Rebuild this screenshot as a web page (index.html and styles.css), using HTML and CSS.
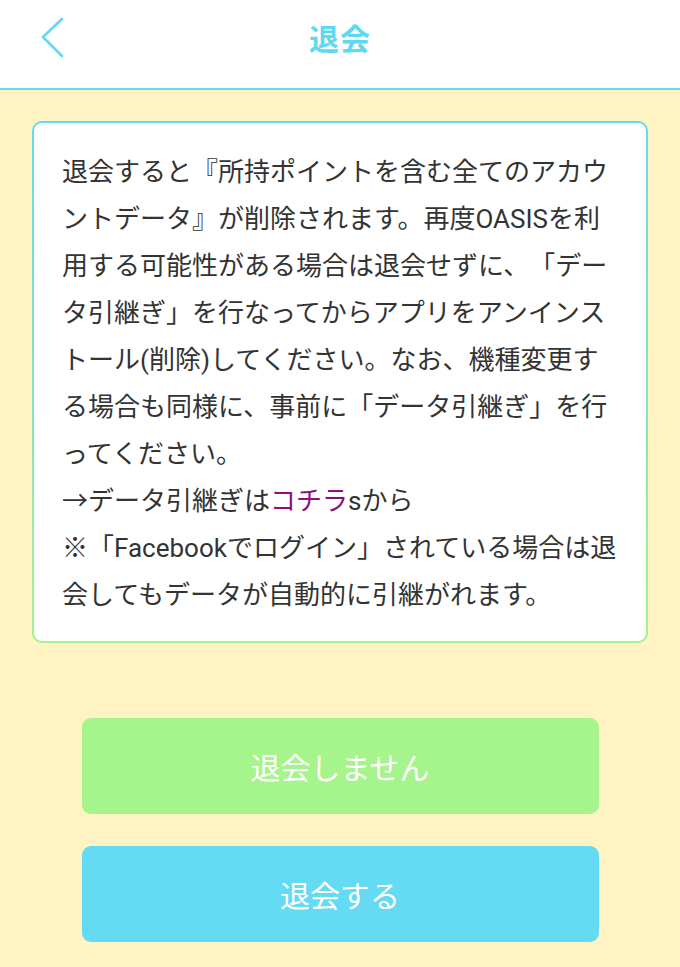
FILE: index.html
```html
<!DOCTYPE html>
<html lang="ja">
<head>
<meta charset="utf-8">
<title>退会</title>
<link rel="stylesheet" href="styles.css">
</head>
<body>
<header class="header">
  <a class="back" href="#" aria-label="戻る">
    <svg width="30" height="44" viewBox="0 0 30 44"><path d="M22 3 L3 21 L22 40" fill="none" stroke="#5fd8f2" stroke-width="2.6" stroke-linecap="round" stroke-linejoin="round"/></svg>
  </a>
  <h1 class="title">退会</h1>
</header>
<main class="content">
  <section class="notice">
    <p>退会すると『所持ポイントを含む全てのアカウントデータ』が削除されます。再度OASISを利用する可能性がある場合は退会せずに、「データ引継ぎ」を行なってからアプリをアンインストール(削除)してください。なお、機種変更する場合も同様に、事前に「データ引継ぎ」を行ってください。</p>
    <p>→データ引継ぎは<a class="link" href="#">コチラ</a>sから</p>
    <p>※「Facebookでログイン」されている場合は退会してもデータが自動的に引継がれます。</p>
  </section>
  <div class="actions">
    <button class="btn btn-stay">退会しません</button>
    <button class="btn btn-leave">退会する</button>
  </div>
</main>
</body>
</html>
```
FILE: styles.css
```css
* { box-sizing: border-box; }
html, body { margin: 0; padding: 0; }
body {
  width: 680px;
  min-height: 967px;
  background: #fff3c3;
  font-family: "Roboto", "Noto Sans CJK JP", sans-serif;
  color: #333333;
}
.header {
  position: relative;
  height: 90px;
  background: #ffffff;
  border-bottom: 2px solid #66d8f0;
  display: flex;
  align-items: center;
  justify-content: center;
}
.back {
  position: absolute;
  left: 40px;
  top: 16px;
  width: 30px;
  height: 44px;
  display: block;
}
.back svg { display: block; }
.title {
  margin: 0 0 14px 0;
  font-size: 30px;
  font-weight: 700;
  color: #5fd8f2;
  letter-spacing: 1px;
}
.content {
  padding: 31px 32px 0 32px;
}
.notice {
  border: 2px solid transparent;
  border-radius: 10px;
  background:
    linear-gradient(#ffffff, #ffffff) padding-box,
    linear-gradient(180deg, #62d8f2 0%, #a4f28e 100%) border-box;
  padding: 26px 26px 22px 28px;
  font-size: 26px;
  line-height: 47px;
  text-spacing-trim: space-all;
}
.notice p { margin: 0; }
.link { color: #8c0f7c; text-decoration: none; }
.actions {
  display: flex;
  flex-direction: column;
  align-items: center;
  gap: 32px;
  margin-top: 75px;
}
.btn {
  width: 517px;
  height: 96px;
  border: none;
  border-radius: 9px;
  color: #ffffff;
  font-family: "Roboto", "Noto Sans CJK JP", sans-serif;
  font-size: 30px;
  padding: 0;
}
.btn-stay { background: #a6f48c; }
.btn-leave { background: #65daf3; }
```
